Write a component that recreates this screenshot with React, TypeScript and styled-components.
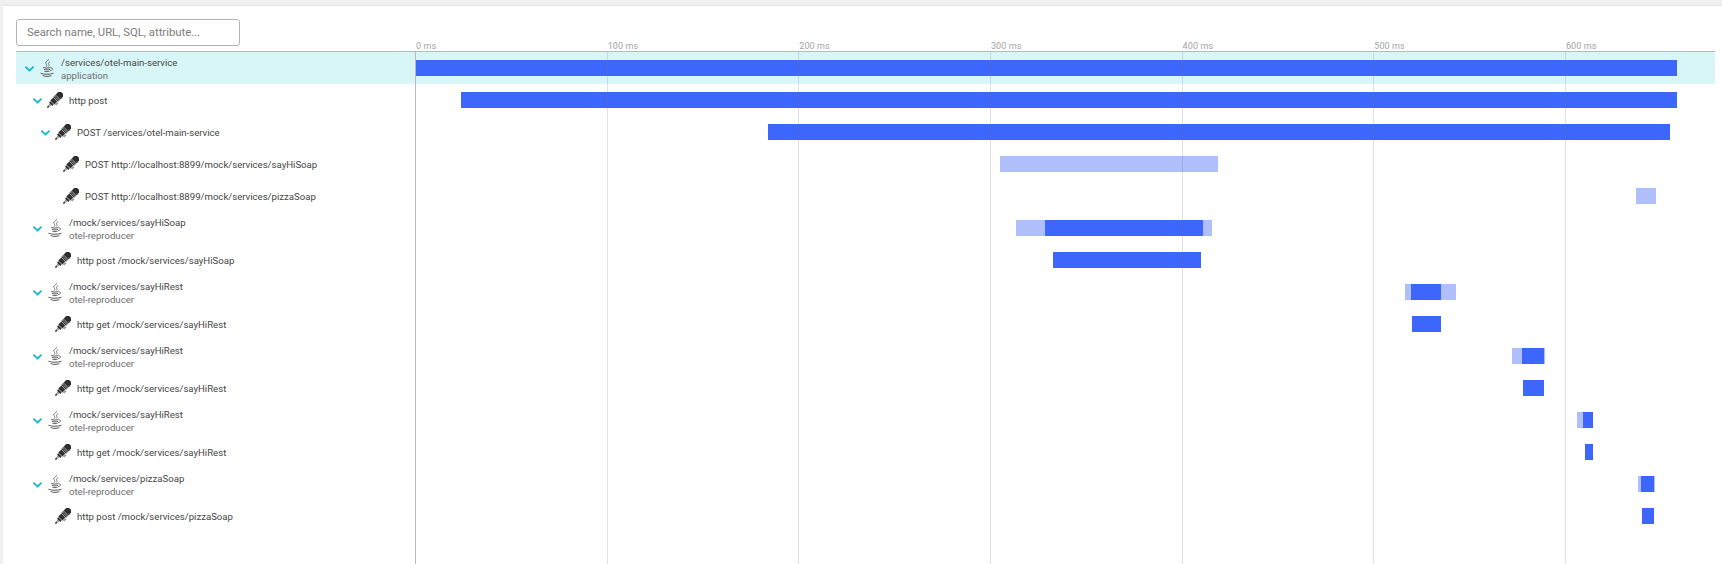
import React from 'react';
import styled, { createGlobalStyle } from 'styled-components';

const GlobalStyle = createGlobalStyle`
  html, body {
    margin: 0;
    padding: 0;
    background: #f0f0f0;
    font-family: Roboto, "Open Sans", sans-serif;
  }
  * { box-sizing: border-box; }
`;

// one millisecond on the time axis, in pixels
const MS = 1.9165;

type Kind = 'java' | 'plug';

interface Span {
  name: string;
  sub?: string;
  kind: Kind;
  depth: number;
  expandable?: boolean;
  selected?: boolean;
  light?: [number, number];
  dark?: [number, number];
}

const spans: Span[] = [
  { name: '/services/otel-main-service', sub: 'application', kind: 'java', depth: 0, expandable: true, selected: true, dark: [0, 1262] },
  { name: 'http post', kind: 'plug', depth: 1, expandable: true, dark: [46, 1262] },
  { name: 'POST /services/otel-main-service', kind: 'plug', depth: 2, expandable: true, dark: [353, 1255] },
  { name: 'POST http://localhost:8899/mock/services/sayHiSoap', kind: 'plug', depth: 3, light: [585, 803] },
  { name: 'POST http://localhost:8899/mock/services/pizzaSoap', kind: 'plug', depth: 3, light: [1221, 1241] },
  { name: '/mock/services/sayHiSoap', sub: 'otel-reproducer', kind: 'java', depth: 1, expandable: true, light: [601, 797], dark: [630, 788] },
  { name: 'http post /mock/services/sayHiSoap', kind: 'plug', depth: 2, dark: [638, 786] },
  { name: '/mock/services/sayHiRest', sub: 'otel-reproducer', kind: 'java', depth: 1, expandable: true, light: [990, 1041], dark: [996, 1026] },
  { name: 'http get /mock/services/sayHiRest', kind: 'plug', depth: 2, dark: [997, 1026] },
  { name: '/mock/services/sayHiRest', sub: 'otel-reproducer', kind: 'java', depth: 1, expandable: true, light: [1097, 1130], dark: [1107, 1129] },
  { name: 'http get /mock/services/sayHiRest', kind: 'plug', depth: 2, dark: [1108, 1129] },
  { name: '/mock/services/sayHiRest', sub: 'otel-reproducer', kind: 'java', depth: 1, expandable: true, light: [1162, 1178], dark: [1168, 1178] },
  { name: 'http get /mock/services/sayHiRest', kind: 'plug', depth: 2, dark: [1170, 1178] },
  { name: '/mock/services/pizzaSoap', sub: 'otel-reproducer', kind: 'java', depth: 1, expandable: true, light: [1223, 1240], dark: [1226, 1239] },
  { name: 'http post /mock/services/pizzaSoap', kind: 'plug', depth: 2, dark: [1227, 1239] },
];

const ticks = [0, 100, 200, 300, 400, 500, 600];

const Page = styled.div`
  height: 564px;
  overflow: hidden;
  padding: 5px 0 0 3px;
`;

const Card = styled.div`
  height: 100%;
  background: #fff;
  border-top: 1px solid #e2e2e2;
  padding: 13px 7px 0 13px;
`;

const SearchBox = styled.input`
  display: block;
  width: 224px;
  height: 27px;
  padding: 0 10px;
  border: 1px solid #b4b4b4;
  border-radius: 3px;
  background: #fff;
  font-family: inherit;
  font-size: 11.3px;
  color: #454646;
  outline: none;

  &::placeholder {
    color: #7c7c7c;
    opacity: 1;
  }
`;

const Header = styled.div`
  display: flex;
  height: 5px;
`;

const Ruler = styled.div`
  position: relative;
  margin-left: 399px;
  flex: 1;
`;

const TickLabel = styled.span`
  position: absolute;
  bottom: -1px;
  font-size: 9px;
  line-height: 12px;
  letter-spacing: 0.1px;
  color: #a3a3a3;
  white-space: nowrap;
`;

const Table = styled.div`
  position: relative;
  border-top: 1px solid #b9b9b9;
`;

const GridLine = styled.div`
  position: absolute;
  top: 0;
  bottom: 0;
  width: 1px;
  background: rgba(120, 120, 120, 0.22);
`;

const AxisLine = styled(GridLine)`
  background: #b9b9b9;
`;

const Row = styled.div<{ $selected?: boolean }>`
  display: flex;
  height: 32px;
  background: ${p => (p.$selected ? '#d8f6f8' : 'transparent')};
`;

const NameCell = styled.div<{ $depth: number }>`
  display: flex;
  align-items: center;
  flex: 0 0 399px;
  padding-left: ${p => 7 + p.$depth * 8}px;
  min-width: 0;
`;

const Toggle = styled.span`
  display: flex;
  flex: 0 0 13px;
  margin-top: 1px;
  margin-right: 3px;
  color: #00b9cc;
`;

const Spacer = styled.span`
  flex: 0 0 16px;
`;

const IconSlot = styled.span`
  display: flex;
  flex: 0 0 16px;
  justify-content: center;
  margin-right: 6px;
`;

const Labels = styled.div`
  display: flex;
  flex-direction: column;
  min-width: 0;
  padding-top: 2px;
`;

const Name = styled.span`
  font-size: 9.6px;
  line-height: 12px;
  color: #454646;
  white-space: nowrap;
`;

const SubName = styled.span`
  font-size: 9.6px;
  line-height: 13px;
  color: #6d6d6d;
  white-space: nowrap;
`;

const Track = styled.div`
  position: relative;
  flex: 1;
`;

const Bar = styled.div<{ $light?: boolean }>`
  position: absolute;
  top: 8px;
  height: 16px;
  background: ${p => (p.$light ? '#aebffc' : '#3d66fd')};
`;

const Chevron = () => (
  <svg width="13" height="13" viewBox="0 0 13 13" fill="none" stroke="currentColor" strokeWidth="1.6">
    <path d="M2.4 4.6 6.5 8.6 10.6 4.6" />
  </svg>
);

const JavaIcon = () => (
  <svg width="14" height="18" viewBox="0 0 14 18" fill="none" stroke="#5a5a5a" strokeWidth="0.8">
    <path d="M9 0.3C6 2.5 5 3.6 6.3 5.2 7 6.1 7 6.8 6.4 7.6" />
    <path d="M10 2.8C8.6 3.8 8 4.6 8.8 5.6 9.2 6.2 9 6.8 8.6 7.4" />
    <path d="M3.2 8.4C5.5 9.2 8.5 9.2 10.6 8.4" strokeWidth="1" />
    <path d="M3.8 10.3C5.5 11 8.5 11 10.2 10.3" strokeWidth="1" />
    <path d="M4.4 12.2C6 12.8 8 12.8 9.6 12.2" strokeWidth="1" />
    <path d="M10.8 9C13.4 8.4 13.4 11.2 10 11.8" />
    <path d="M0.5 14.2C3.5 15.6 10.5 15.6 13.5 14.2" strokeWidth="1" />
    <path d="M2.6 16.6C5.5 17.6 8.5 17.6 11.4 16.6" strokeWidth="1" />
  </svg>
);

const PlugIcon = () => (
  <svg width="16" height="16" viewBox="0 0 16 16">
    <g transform="rotate(-45 8 8)">
      <rect x="-2.8" y="7.2" width="2.4" height="1.6" fill="#444" />
      <rect x="0" y="7" width="1.4" height="2" fill="#777" />
      <rect x="1.8" y="5.6" width="2.2" height="4.6" fill="#2f2f2f" />
      <rect x="4.4" y="5" width="4.2" height="5.6" fill="#2f2f2f" />
      <rect x="5" y="10.6" width="3" height="2.2" fill="#9a9a9a" />
      <rect x="9" y="4.6" width="1.2" height="6.8" fill="#2f2f2f" />
      <rect x="10.6" y="4.6" width="1.2" height="6.8" fill="#2f2f2f" />
      <rect x="12.2" y="4.6" width="5.8" height="6.8" fill="#2f2f2f" />
    </g>
  </svg>
);

export default function App() {
  return (
    <Page>
      <GlobalStyle />
      <Card>
        <SearchBox placeholder="Search name, URL, SQL, attribute..." />
        <Header>
          <Ruler>
            {ticks.map(t => (
              <TickLabel key={t} style={{ left: t * MS + 1 }}>{t} ms</TickLabel>
            ))}
          </Ruler>
        </Header>
        <Table>
          {spans.map((s, i) => (
            <Row key={i} $selected={s.selected}>
              <NameCell $depth={s.depth}>
                {s.expandable ? <Toggle><Chevron /></Toggle> : <Spacer />}
                <IconSlot>{s.kind === 'java' ? <JavaIcon /> : <PlugIcon />}</IconSlot>
                <Labels>
                  <Name>{s.name}</Name>
                  {s.sub && <SubName>{s.sub}</SubName>}
                </Labels>
              </NameCell>
              <Track>
                {s.light && <Bar $light style={{ left: s.light[0], width: s.light[1] - s.light[0] }} />}
                {s.dark && <Bar style={{ left: s.dark[0], width: s.dark[1] - s.dark[0] }} />}
              </Track>
            </Row>
          ))}
          <AxisLine style={{ left: 399, height: 520 }} />
          {ticks.slice(1).map(t => (
            <GridLine key={t} style={{ left: 399 + t * MS, height: 520 }} />
          ))}
        </Table>
      </Card>
    </Page>
  );
}
